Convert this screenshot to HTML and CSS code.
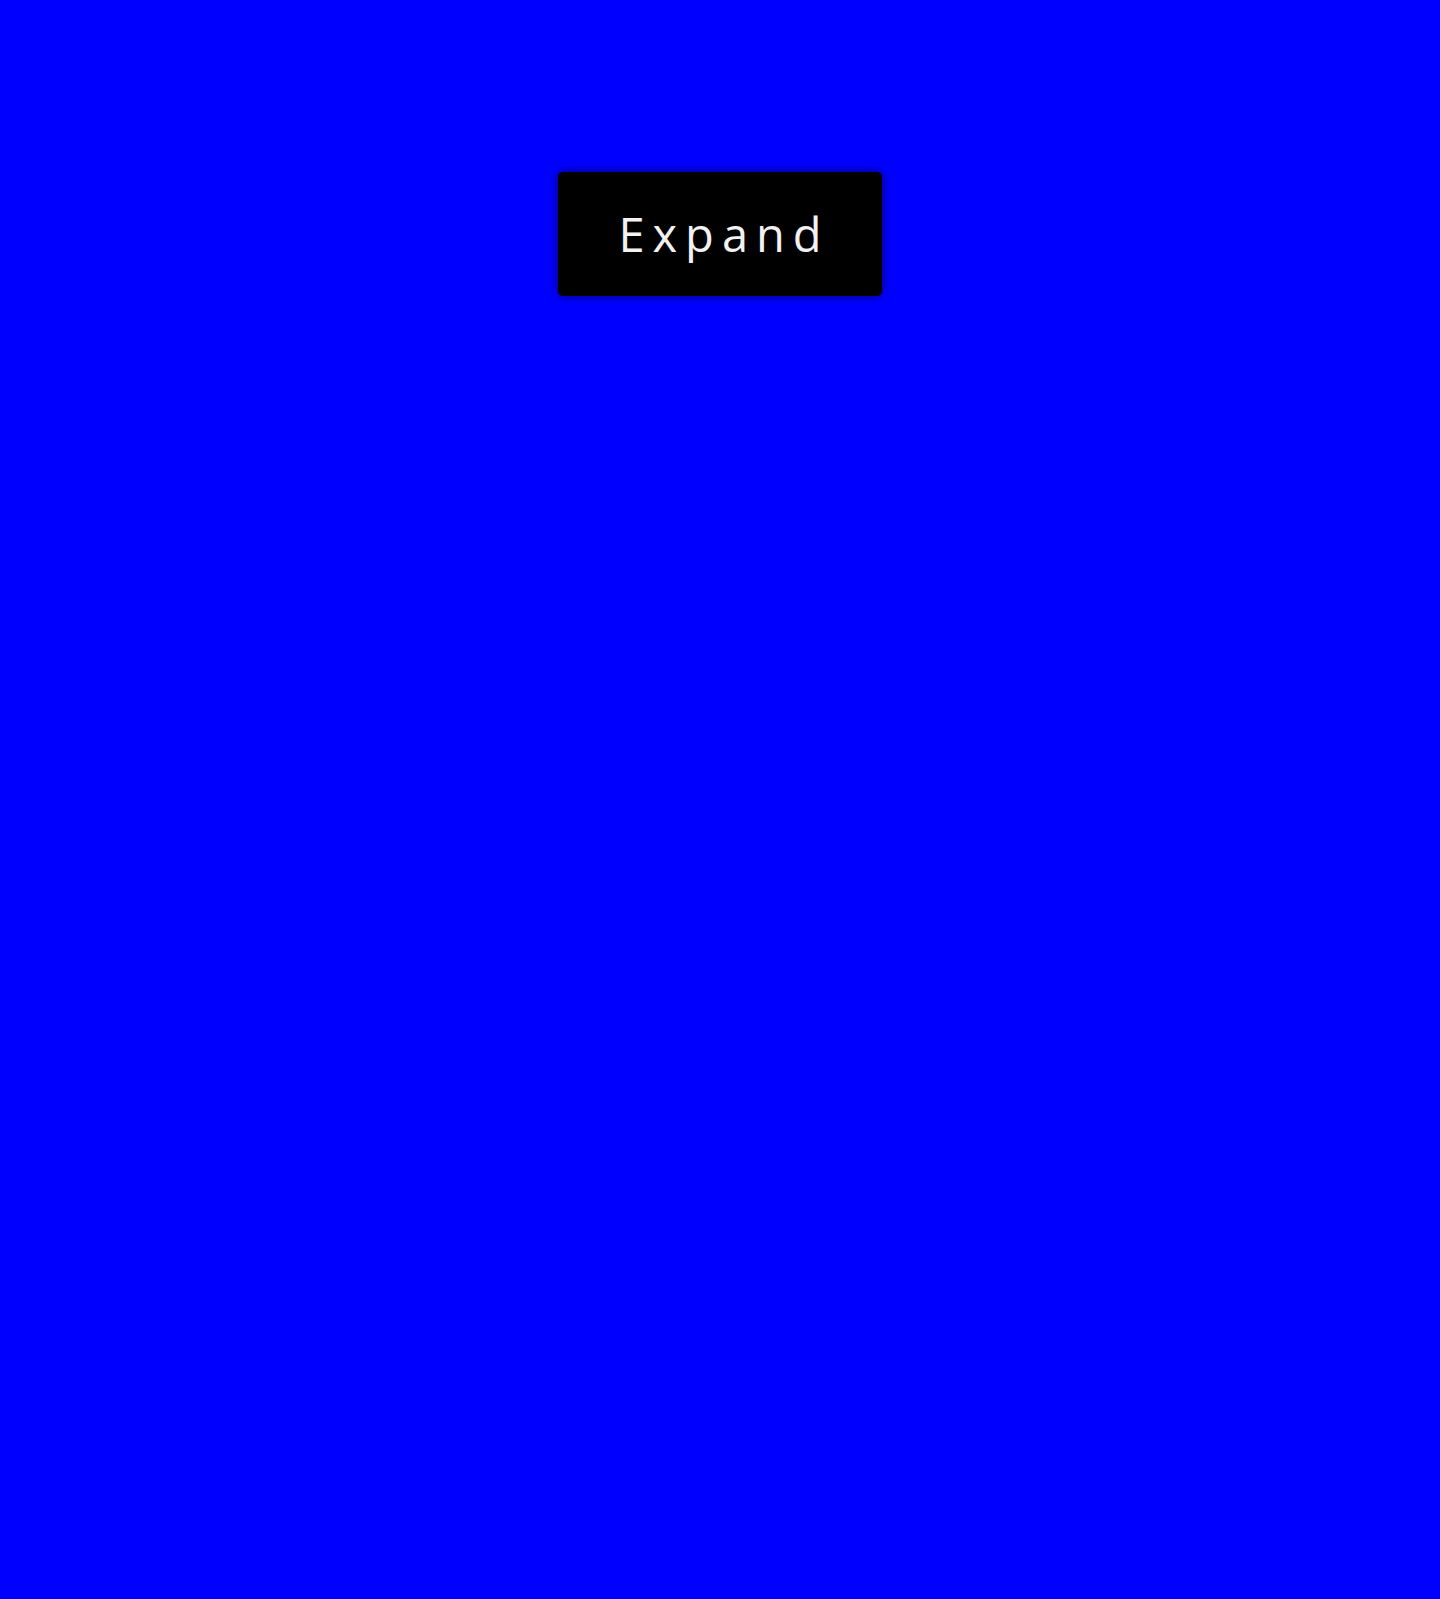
FILE: index.html
```html
<!DOCTYPE html>
<html lang="en">
<head>
<meta charset="utf-8">
<title>Expand</title>
<link rel="stylesheet" href="styles.css">
</head>
<body>
<main class="stage">
  <button class="expand-btn" type="button">Expand</button>
</main>
</body>
</html>
```
FILE: styles.css
```css
html, body {
  margin: 0;
  padding: 0;
  background: #0000ff;
  height: 100%;
}
.stage {
  display: flex;
  justify-content: center;
  padding-top: 172px;
}
.expand-btn {
  box-sizing: border-box;
  width: 324px;
  height: 124px;
  background: #000;
  color: #f2f2f2;
  border: none;
  border-radius: 5px;
  font-family: "Open Sans", Lato, sans-serif;
  font-size: 47px;
  font-weight: 400;
  letter-spacing: 8px;
  padding: 0 0 0 8px;
  box-shadow: 0 0 10px rgba(0,0,0,0.6);
  cursor: pointer;
}
```
